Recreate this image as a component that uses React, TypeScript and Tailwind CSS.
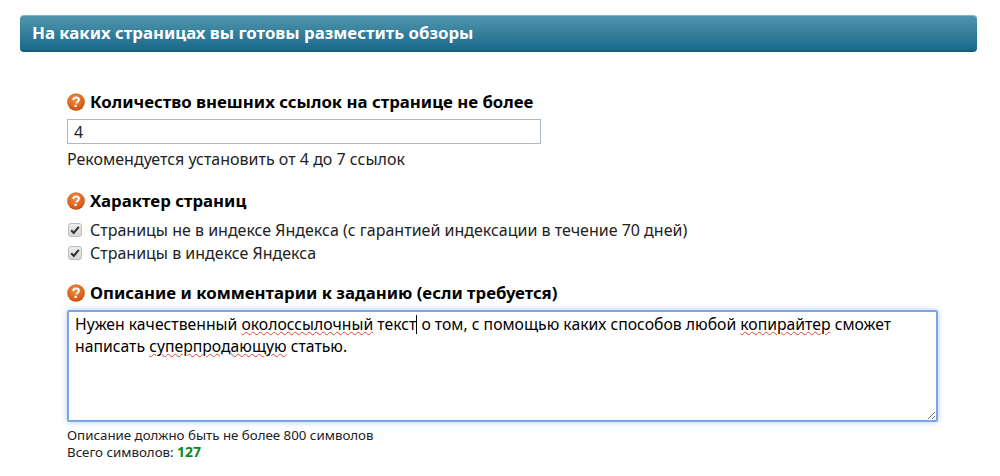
import React from "react";

function Help() {
  return (
    <svg width="18" height="18" viewBox="0 0 18 18" className="shrink-0">
      <defs>
        <radialGradient id="h" cx="45%" cy="35%" r="70%">
          <stop offset="0%" stopColor="#f0924f" />
          <stop offset="60%" stopColor="#e0661f" />
          <stop offset="100%" stopColor="#bd4c10" />
        </radialGradient>
      </defs>
      <circle cx="9" cy="9" r="8.8" fill="url(#h)" />
      <path d="M6.2 7.1c0-1.6 1.2-2.6 2.9-2.6 1.7 0 2.8 1 2.8 2.3 0 2-2.4 2-2.4 3.7" fill="none" stroke="#fff" strokeWidth="1.9" />
      <rect x="7.5" y="11.8" width="2.2" height="2.2" fill="#fff" />
    </svg>
  );
}

function Check({ label }: { label: string }) {
  return (
    <div className="flex items-center h-[23px] text-[16px] text-[#222]">
      <span className="w-[14px] h-[14px] mr-[8px] ml-[1px] rounded-[3px] border border-[#bdbdbd] bg-gradient-to-b from-[#ededed] to-[#d6d6d6] flex items-center justify-center">
        <svg width="12" height="12" viewBox="0 0 12 12">
          <path d="M2.2 6.2 4.8 9 9.8 2.8" fill="none" stroke="#333" strokeWidth="2.1" />
        </svg>
      </span>
      {label}
    </div>
  );
}

function Title({ children }: { children: React.ReactNode }) {
  return (
    <div className="flex items-center gap-[5px] h-[24px] text-[16.8px] font-bold text-black">
      <Help />
      {children}
    </div>
  );
}

const Wavy = ({ children }: { children: React.ReactNode }) => (
  <span className="underline decoration-wavy decoration-[#e0453a] decoration-1 underline-offset-[1px]">{children}</span>
);

export default function App() {
  return (
    <div className="w-[1000px] h-[476px] bg-white overflow-hidden pt-[15px] font-['Noto_Sans','DejaVu_Sans',sans-serif]">
      <div className="mx-[20px] w-[957px] h-[37px] rounded-[4px] border-t border-t-[#7fb4c4] border-b-2 border-b-[#12607f] bg-gradient-to-b from-[#4f96ac] to-[#19698b] flex items-center px-[12px] text-white font-bold text-[16.8px]">
        На каких страницах вы готовы разместить обзоры
      </div>

      <div className="pl-[67px] pt-[38px] w-[960px]">
        <Title>Количество внешних ссылок на странице не более</Title>
        <div className="mt-[5px] w-[474px] h-[25px] border border-[#a9b8cf] flex items-center px-[6px] text-[16px] text-[#222]">4</div>
        <div className="mt-[3px] h-[24px] flex items-center text-[16px] text-[#222]">Рекомендуется установить от 4 до 7 ссылок</div>

        <div className="mt-[18px]"><Title>Характер страниц</Title></div>
        <div className="mt-[5px]">
          <Check label="Страницы не в индексе Яндекса (с гарантией индексации в течение 70 дней)" />
          <Check label="Страницы в индексе Яндекса" />
        </div>

        <div className="mt-[17px]"><Title>Описание и комментарии к заданию (если требуется)</Title></div>
        <div className="relative mt-[5px] w-[871px] h-[112px] rounded-[2px] border-2 border-[#7ba5ea] shadow-[0_0_6px_rgba(90,140,220,0.45)] px-[6px] py-[1px] text-[15.75px] leading-[22px] text-black">
          Нужен качественный <Wavy>околоссылочный</Wavy> текст<span className="inline-block w-px h-[19px] bg-black align-[-4px]"></span> о том, с помощью каких способов любой <Wavy>копирайтер</Wavy> сможет написать <Wavy>суперпродающую</Wavy> статью.
          <svg width="10" height="10" viewBox="0 0 10 10" className="absolute right-0 bottom-0">
            <path d="M9 2 2 9M9 6 6 9" stroke="#777" strokeWidth="1" fill="none" />
          </svg>
        </div>
        <div className="mt-[5px] text-[13.3px] leading-[16px] text-[#222]">Описание должно быть не более 800 символов</div>
        <div className="text-[13.3px] leading-[17px] text-[#222]">Всего символов: <b className="text-[#0a8a1a] text-[14px]">127</b></div>
      </div>
    </div>
  );
}
